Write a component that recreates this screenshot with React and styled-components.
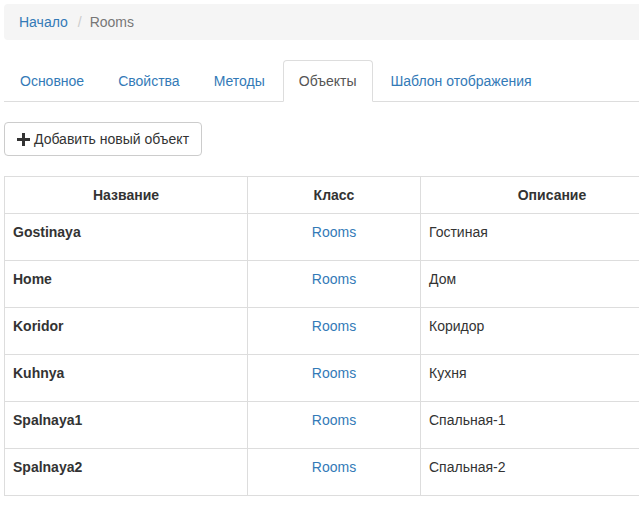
import styled, { createGlobalStyle } from "styled-components";

const GlobalStyle = createGlobalStyle`
  body {
    margin: 0;
    overflow: hidden;
    font-family: "Liberation Sans", Arial, sans-serif;
    font-size: 14px;
    line-height: 20px;
    color: #333;
    background: #fff;
  }
  a { color: #337ab7; text-decoration: none; }
`;

const Page = styled.div`
  width: 680px;
  padding: 4px 0 0 4px;
`;

const Breadcrumb = styled.ol`
  list-style: none;
  margin: 0 0 20px;
  padding: 8px 15px;
  background: #f5f5f5;
  border-radius: 4px;
  display: flex;
`;

const Crumb = styled.li`
  color: ${(p) => (p.$active ? "#777" : "#337ab7")};
`;

const Sep = styled.li`
  color: #ccc;
  padding: 0 8px 0 10px;
`;

const Tabs = styled.ul`
  list-style: none;
  margin: 0;
  padding: 0;
  display: flex;
  border-bottom: 1px solid #ddd;
`;

const Tab = styled.li`
  margin: 0 2px -1px 0;
  padding: 10px 15px;
  border: 1px solid ${(p) => (p.$active ? "#ddd" : "transparent")};
  border-bottom-color: ${(p) => (p.$active ? "#fff" : "transparent")};
  border-radius: 4px 4px 0 0;
  background: ${(p) => (p.$active ? "#fff" : "transparent")};
  color: ${(p) => (p.$active ? "#555" : "#337ab7")};
`;

const Button = styled.button`
  margin-top: 20px;
  display: inline-flex;
  align-items: center;
  gap: 4px;
  padding: 6px 12px;
  font: inherit;
  color: #333;
  background: #fff;
  border: 1px solid #ccc;
  border-radius: 4px;
`;

const Table = styled.table`
  margin-top: 20px;
  width: 680px;
  table-layout: fixed;
  border-collapse: collapse;
  border: 1px solid #ddd;
`;

const Th = styled.th`
  padding: 8px;
  border: 1px solid #ddd;
  text-align: center;
  font-weight: bold;
  width: ${(p) => (p.$w ? `${p.$w}px` : "auto")};
`;

const Td = styled.td`
  padding: 8px 8px 18px;
  border: 1px solid #ddd;
  vertical-align: top;
  text-align: ${(p) => (p.$center ? "center" : "left")};
  font-weight: ${(p) => (p.$bold ? "bold" : "normal")};
`;

const Plus = () => (
  <svg width="13" height="13" viewBox="0 0 13 13">
    <path d="M5 0h3v5h5v3H8v5H5V8H0V5h5z" fill="#333" />
  </svg>
);

const rows = [
  ["Gostinaya", "Гостиная"],
  ["Home", "Дом"],
  ["Koridor", "Коридор"],
  ["Kuhnya", "Кухня"],
  ["Spalnaya1", "Спальная-1"],
  ["Spalnaya2", "Спальная-2"],
];

const tabs = ["Основное", "Свойства", "Методы", "Объекты", "Шаблон отображения"];

export default function App() {
  return (
    <>
      <GlobalStyle />
      <Page>
        <Breadcrumb>
          <Crumb>Начало</Crumb>
          <Sep>/</Sep>
          <Crumb $active>Rooms</Crumb>
        </Breadcrumb>
        <Tabs>
          {tabs.map((t) => (
            <Tab key={t} $active={t === "Объекты"}>{t}</Tab>
          ))}
        </Tabs>
        <Button>
          <Plus /> Добавить новый объект
        </Button>
        <Table>
          <thead>
            <tr>
              <Th $w={226}>Название</Th>
              <Th $w={156}>Класс</Th>
              <Th>Описание</Th>
            </tr>
          </thead>
          <tbody>
            {rows.map(([name, desc]) => (
              <tr key={name}>
                <Td $bold>{name}</Td>
                <Td $center><a href="#">Rooms</a></Td>
                <Td>{desc}</Td>
              </tr>
            ))}
          </tbody>
        </Table>
      </Page>
    </>
  );
}
